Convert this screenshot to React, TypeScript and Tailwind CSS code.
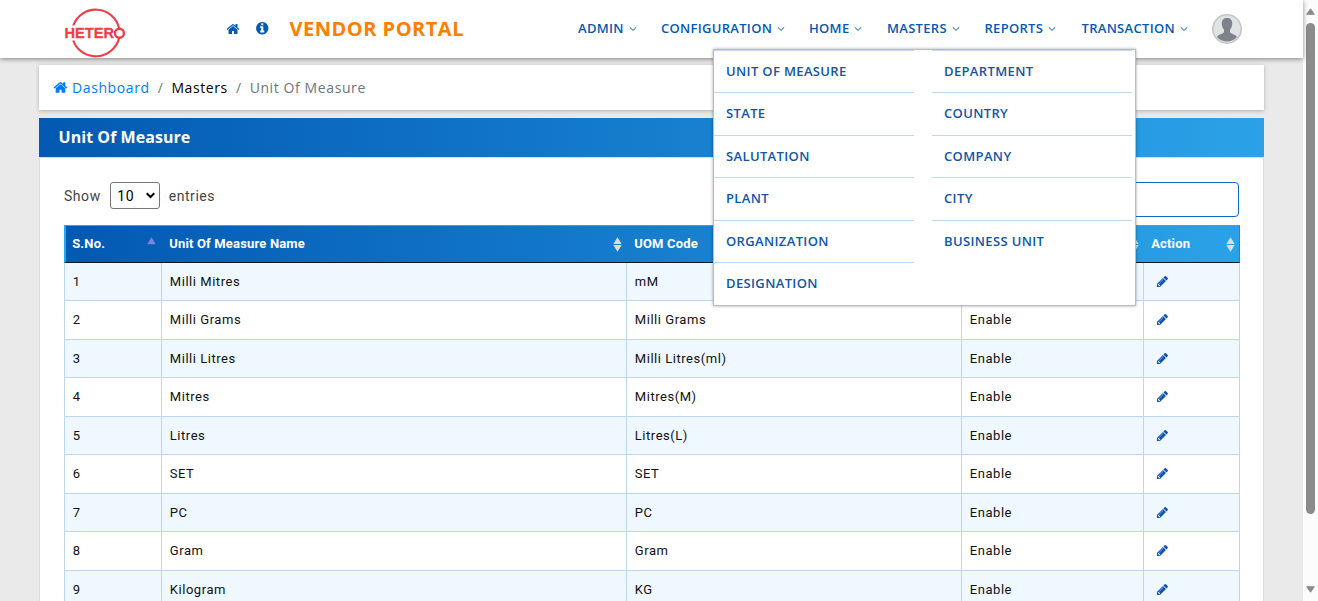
import React from "react";

const HOME =
  "M1472 992v480q0 26-19 45t-45 19h-384v-384h-256v384h-384q-26 0-45-19t-19-45v-480q0-1 .5-3t.5-3l575-474 575 474q1 2 1 6zm223-69l-62 74q-8 9-21 11h-3q-13 0-21-7l-692-577-692 577q-12 8-24 7-13-2-21-11l-62-74q-8-10-7-23.5t11-21.5l719-599q32-26 76-26t76 26l244 204v-195q0-14 9-23t23-9h192q14 0 23 9t9 23v408l219 182q10 8 11 21.5t-7 23.5z";
const INFO =
  "M1152 1376v-160q0-14-9-23t-23-9h-96v-512q0-14-9-23t-23-9h-320q-14 0-23 9t-9 23v160q0 14 9 23t23 9h96v320h-96q-14 0-23 9t-9 23v160q0 14 9 23t23 9h448q14 0 23-9t9-23zm-128-896v-160q0-14-9-23t-23-9h-192q-14 0-23 9t-9 23v160q0 14 9 23t23 9h192q14 0 23-9t9-23zm640 416q0 209-103 385.5t-279.5 279.5-385.5 103-385.5-103-279.5-279.5-103-385.5 103-385.5 279.5-279.5 385.5-103 385.5 103 279.5 279.5 103 385.5z";
const PENCIL =
  "M491 1536l91-91-235-235-91 91v107h128v128h107zm523-928q0-22-22-22-10 0-17 7l-542 542q-7 7-7 17 0 22 22 22 10 0 17-7l542-542q7-7 7-17zm-54-192l416 416-832 832h-416v-416zm683 96q0 53-37 90l-166 166-416-416 166-165q36-38 90-38 53 0 91 38l235 234q37 39 37 91z";

function Glyph({ d, className }: { d: string; className: string }) {
  return (
    <svg viewBox="0 0 1792 1792" fill="currentColor" className={className}>
      <path d={d} />
    </svg>
  );
}

function Logo() {
  return (
    <svg width="64" height="52" viewBox="0 0 64 52" className="block">
      <g fill="none" stroke="#ee3e48" strokeWidth="2.2">
        <path d="M9.2 18.5A24 24 0 0 1 55.2 21.5" />
        <path d="M9.2 33.5A24 24 0 0 0 55.2 30.500" />
        <circle cx="55.4" cy="26.2" r="4.5" strokeWidth="2.4" />
      </g>
      <text
        x="0.5"
        y="31.300"
        textLength="49.500"
        lengthAdjust="spacingAndGlyphs"
        fontSize="14.500"
        fontWeight="700"
        fontFamily="Liberation Sans, sans-serif"
        fill="#ee3e48"
        stroke="#ee3e48"
        strokeWidth="0.3"
      >
        HETER
      </text>
    </svg>
  );
}

const NAV = [
  { label: "ADMIN", cls: "w-[83px]" },
  { label: "CONFIGURATION", cls: "w-[148px]" },
  { label: "HOME", cls: "w-[78px]" },
  { label: "MASTERS", cls: "w-[97.5px]" },
  { label: "REPORTS", cls: "w-[97px]" },
  { label: "TRANSACTION", cls: "w-[130.5px]" },
];

const MENU = [
  ["UNIT OF MEASURE", "STATE", "SALUTATION", "PLANT", "ORGANIZATION", "DESIGNATION"],
  ["DEPARTMENT", "COUNTRY", "COMPANY", "CITY", "BUSINESS UNIT"],
];

const ROWS = [
  ["Milli Mitres", "mM"],
  ["Milli Grams", "Milli Grams"],
  ["Milli Litres", "Milli Litres(ml)"],
  ["Mitres", "Mitres(M)"],
  ["Litres", "Litres(L)"],
  ["SET", "SET"],
  ["PC", "PC"],
  ["Gram", "Gram"],
  ["Kilogram", "KG"],
];

const COLS = "grid grid-cols-[97px_465px_335px_182px_96px]";

function Header() {
  return (
    <header className="relative z-10 flex h-[58px] shrink-0 bg-white shadow-[0_1px_5px_rgba(0,0,0,0.45)]">
      <div className="w-[163px] pl-[64px] pt-[7px]">
        <Logo />
      </div>
      <div className="flex h-[57px] w-[415px] items-center pl-[63px] text-[#0459b2]">
        <Glyph d={HOME} className="size-[14px]" />
        <Glyph d={INFO} className="ml-[15px] size-[14.500px]" />
        <h1 className="ml-[20px] whitespace-nowrap text-[20px] font-bold tracking-[0.5px] text-[#ff7e00]">VENDOR PORTAL</h1>
      </div>
      <nav className="flex h-[58px] items-center text-[13px] font-semibold text-[#0459b2]">
        {NAV.map((n) => (
          <a key={n.label} className={n.cls + " flex items-center whitespace-nowrap tracking-[0.3px]"}>
            {n.label}
            <svg width="8" height="6" viewBox="0 0 8 6" className="ml-[5px]" fill="none" stroke="currentColor">
              <path d="M0.8 1.3L4 4.4L7.2 1.3" />
            </svg>
          </a>
        ))}
      </nav>
      <svg width="30" height="30" viewBox="0 0 30 30" className="mt-[14px]">
        <circle cx="15" cy="15" r="14.2" fill="#dfe3e4" stroke="#c6c6c6" strokeWidth="1.6" />
        <path
          d="M15 4c3.600 0 5.400 2.300 5.200 5.800c0 2.500-1 4.700-2.200 6v2.500c1 1.800 5.500 2 7 4.600A13.200 13.200 0 0 1 5 22.900c1.500-2.600 6-2.800 7-4.600v-2.500c-1.200-1.300-2.200-3.500-2.200-6C9.600 6.300 11.400 4 15 4z"
          fill="#7e828b"
        />
      </svg>
      <div className="absolute left-[713px] top-[49px] flex h-[257px] w-[423px] gap-[18px] border border-[#b9bcc0] bg-white text-[13px] font-semibold tracking-[0.36px] text-[#0f56a8] shadow-[0_0_3px_rgba(0,0,0,0.35)]">
        {MENU.map((col, i) => (
          <ul key={i} className="w-[200px]">
            {col.map((m) => (
              <li key={m} className="flex h-[42.4px] items-center border-t border-[#bdd8f0] pl-[12px]">
                {m}
              </li>
            ))}
          </ul>
        ))}
      </div>
    </header>
  );
}

function Sort({ active }: { active?: boolean }) {
  return active ? (
    <svg width="9" height="16" viewBox="0 0 9 16" className="mr-[6px]">
      <path d="M0.300 8.300L4.500 1.300L8.700 8.300z" fill="#7f83df" />
    </svg>
  ) : (
    <svg width="9" height="15" viewBox="0 0 9 15" className="mr-[5.500px]">
      <path d="M0.300 6.900L4.500 0.200L8.700 6.900zM0.300 8.100L4.500 14.800L8.700 8.100z" fill="#dcdcdc" />
    </svg>
  );
}

function Table() {
  return (
    <div className="w-[1176px] font-['Roboto',sans-serif]">
      <div className="h-[38px] border-b border-b-[#07182c] border-l-2 border-l-[#0cb4f5] border-t border-t-[#0cb4f5] border-r border-r-[#1787d8] bg-linear-to-r from-[#0459b2] to-[#2ba2e8]">
        <div className={COLS + " -ml-[1px] h-[36px] text-[13px] font-bold tracking-[0.17px] text-white"}>
          {["S.No.", "Unit Of Measure Name", "UOM Code", "", "Action"].map((h, i) => (
            <div key={i} className="flex items-center justify-between pl-[7.200px]">
              <span>{h}</span>
              <Sort active={i === 0} />
            </div>
          ))}
        </div>
      </div>
      {ROWS.map(([name, code], i) => (
        <div
          key={name}
          className={
            COLS +
            " border-x border-b border-[#bfd7ee] text-[13px] tracking-[0.54px] text-[#111] " +
            (i % 2 ? "h-[39px] bg-white" : "h-[38px] bg-[#eff7ff]")
          }
        >
          {[String(i + 1), name, code, "Enable"].map((v, j) => (
            <div key={j} className="flex items-center border-r border-[#bfd7ee] pl-[7.800px]">
              {v}
            </div>
          ))}
          <div className="flex items-center pl-[12px]">
            <Glyph d={PENCIL} className="-mt-[1px] size-[13px] text-[#0f52b0]" />
          </div>
        </div>
      ))}
    </div>
  );
}

export default function App() {
  return (
    <div className="flex h-[601px] w-[1318px] overflow-hidden bg-[#fcfcfc] font-['Open_Sans',sans-serif]">
      <div className="flex w-[1303px] flex-col bg-[#eaeaea]">
        <Header />
        <main className="mx-[39px] mt-[7px] flex w-[1225px] flex-col">
          <div className="flex h-[45px] shrink-0 items-center bg-white pl-[14px] text-[14px] tracking-[0.6px] shadow-[0_1px_4px_rgba(0,0,0,0.25)]">
            <Glyph d={HOME} className="size-[15px] text-[#007bff]" />
            <span className="ml-[4px] text-[#007bff]">Dashboard</span>
            <span className="mx-[8px] text-[#6c757d]">/</span>
            <span className="text-black">Masters</span>
            <span className="mx-[8px] text-[#6c757d]">/</span>
            <span className="text-[#6c757d]">Unit Of Measure</span>
          </div>
          <section className="mt-[8px]">
            <h2 className="flex h-[39px] items-center bg-linear-to-r from-[#0459b2] to-[#2ba2e8] pb-[2px] pl-[19.500px] text-[16px] font-bold tracking-[0.05px] text-white">
              Unit Of Measure
            </h2>
            <div className="h-[500px] border border-[#dcdcdc] bg-white pl-[24px] pt-[24px]">
              <div className="flex h-[43px] w-[1175px] items-start justify-between font-['Roboto',sans-serif] text-[14px] tracking-[0.55px] text-[#444]">
                <div className="flex items-center">
                  <span className="pt-[2px]">Show</span>
                  <div className="mx-[9px] flex h-[27px] w-[50px] items-center justify-between rounded-[3px] border border-[#767676] bg-white pl-[6.500px] pr-[4px] text-black">
                    <span className="pt-[2px]">10</span>
                    <svg width="9" height="7" viewBox="0 0 9 7" fill="none" stroke="#000" strokeWidth="2">
                      <path d="M0.700 1.300L4.500 5L8.300 1.300" />
                    </svg>
                  </div>
                  <span className="pt-[2px]">entries</span>
                </div>
                <div className="h-[35px] w-[200px] rounded-[4px] border border-[#0d6ac8] bg-white" />
              </div>
              <Table />
            </div>
          </section>
        </main>
      </div>
      <div className="flex w-[15px] flex-col items-center bg-[#fcfcfc]">
        <svg width="9" height="7" viewBox="0 0 9 7" className="mt-[8px] shrink-0">
          <path d="M4.500 0.800L8.300 6.300H0.700z" fill="#8b8b8b" stroke="#8b8b8b" strokeLinejoin="round" />
        </svg>
        <div className="mt-[8px] h-[491px] w-[9px] shrink-0 rounded-full bg-[#8b8b8b]" />
        <svg width="9" height="7" viewBox="0 0 9 7" className="mt-[72px] shrink-0">
          <path d="M4.500 6.200L8.300 0.700H0.700z" fill="#8b8b8b" stroke="#8b8b8b" strokeLinejoin="round" />
        </svg>
      </div>
    </div>
  );
}
